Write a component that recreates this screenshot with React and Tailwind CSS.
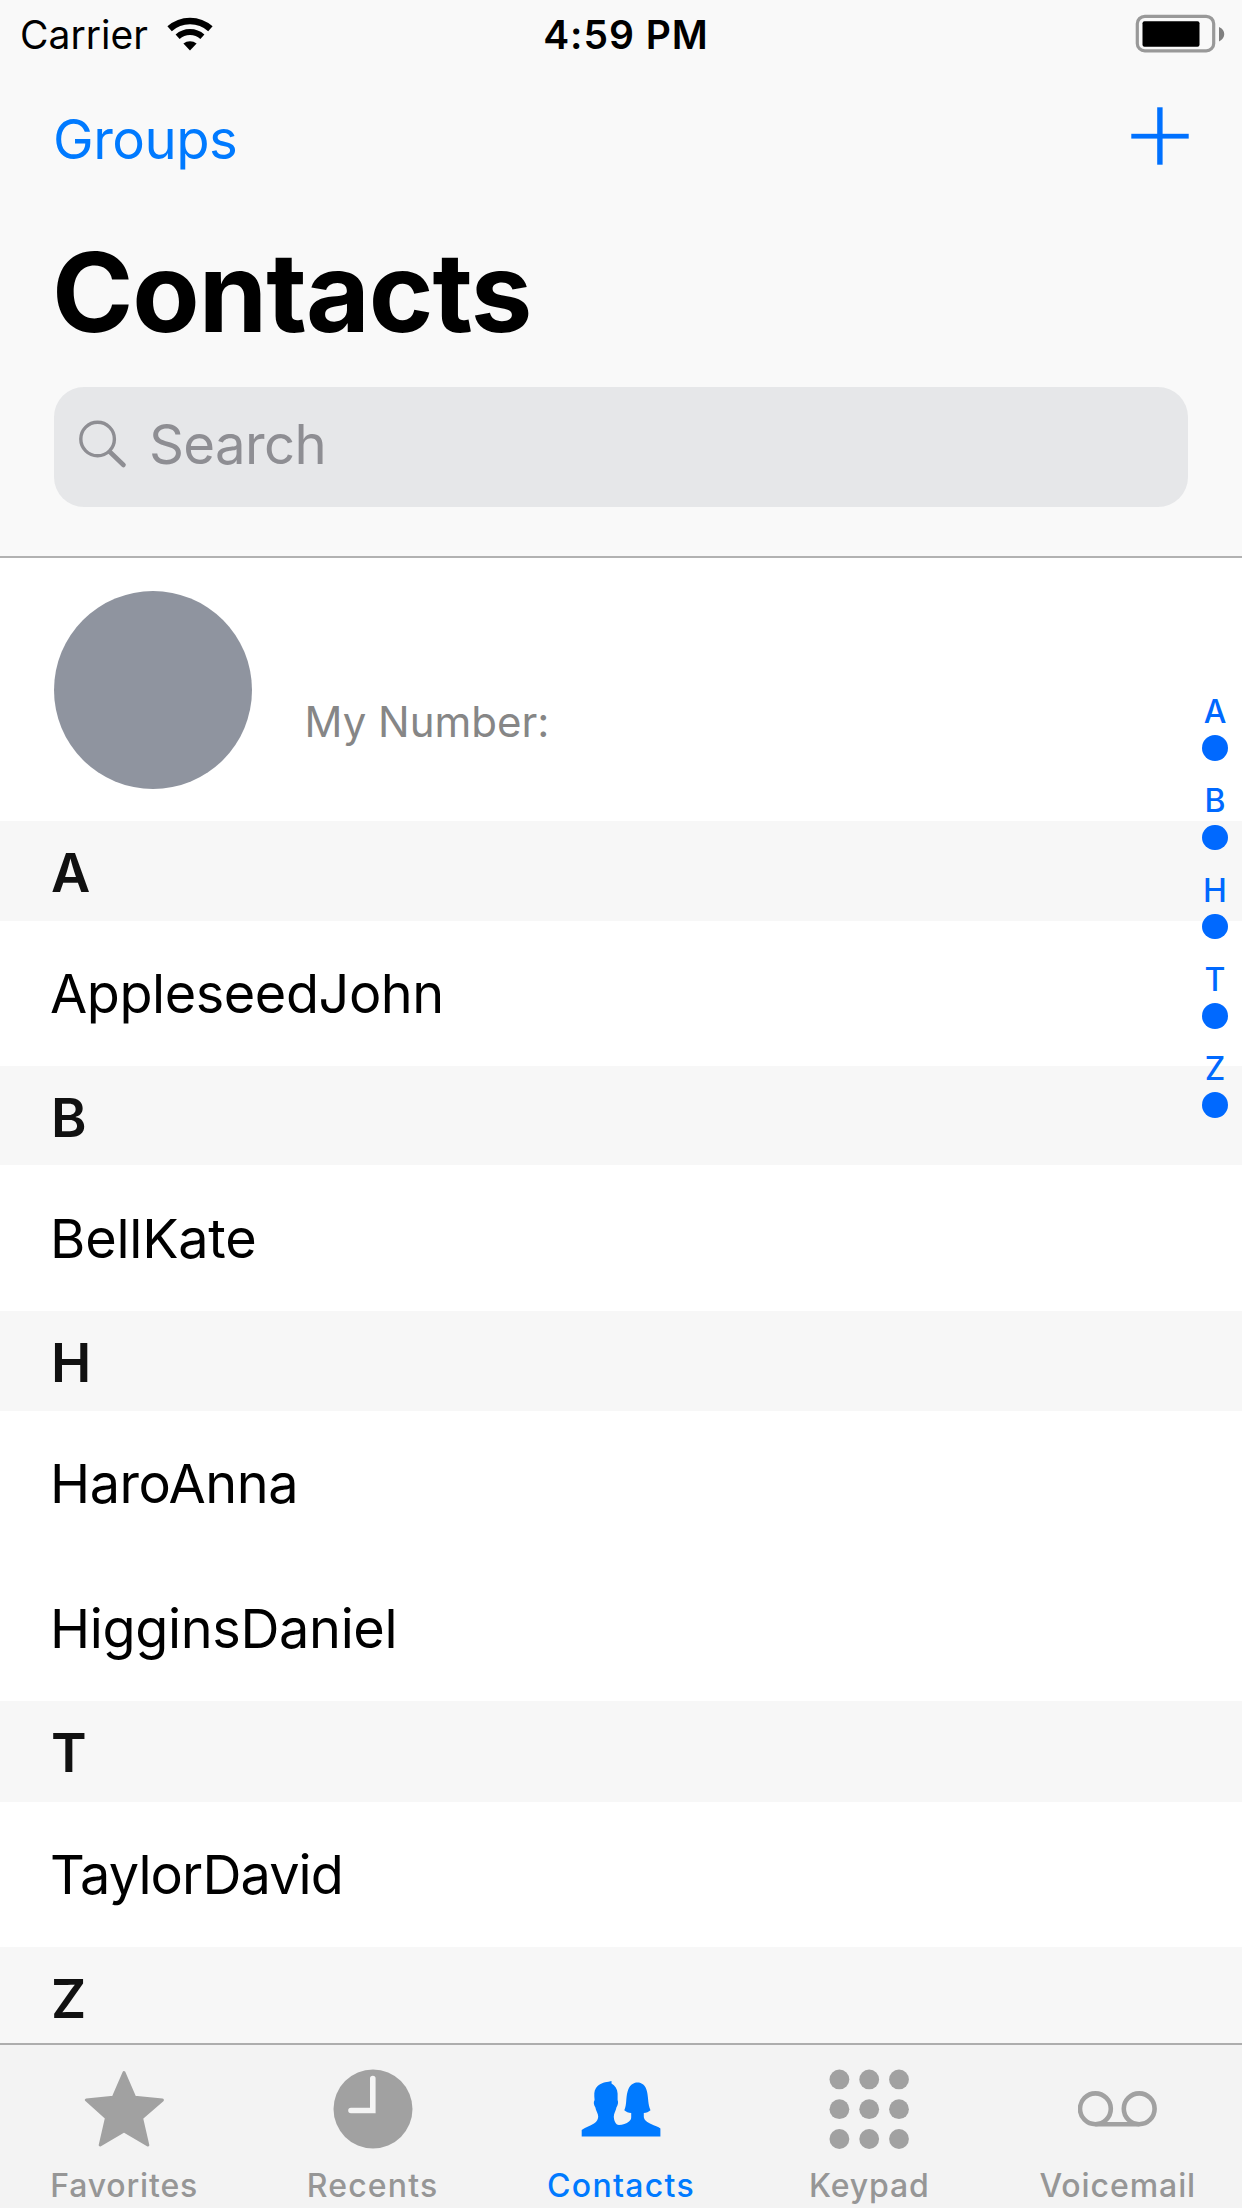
const sections = [
  {
    letter: "A",
    height: "h-[100px]",
    people: [{ name: "AppleseedJohn", style: "h-[145px] tracking-[-0.44px]" }],
  },
  {
    letter: "B",
    height: "h-[99px] pt-[4px]",
    people: [{ name: "BellKate", style: "h-[146px] pt-[2px] tracking-[-0.2px]" }],
  },
  {
    letter: "H",
    height: "h-[100px] pt-[4px]",
    people: [
      { name: "HaroAnna", style: "h-[145px] pt-[1px] tracking-[-0.48px]" },
      { name: "HigginsDaniel", style: "h-[145px] tracking-[-0.35px]" },
    ],
  },
  {
    letter: "T",
    height: "h-[101px]",
    people: [{ name: "TaylorDavid", style: "h-[145px] tracking-[-0.88px]" }],
  },
  { letter: "Z", height: "h-[100px]", people: [] },
];

function WifiIcon() {
  return (
    <svg className="ml-[18px] h-[36px] w-[48px]" viewBox="0 0 48 36" fill="none" stroke="#000">
      <path d="M3.6 12.8 A30.500 30.500 0 0 1 44.4 12.8" strokeWidth="6.6" />
      <path d="M11.6 20.8 A18.500 18.500 0 0 1 36.4 20.8" strokeWidth="6" />
      <path d="M17.4 27.600 A10.500 10.500 0 0 1 30.600 27.600 L24 34.400 Z" fill="#000" stroke="none" />
    </svg>
  );
}

function BatteryIcon() {
  return (
    <svg className="h-[40px] w-[92px]" viewBox="0 0 92 40">
      <rect x="2.3" y="2.3" width="76.4" height="34.6" rx="7.5" fill="none" stroke="#999" strokeWidth="3.2" />
      <rect x="7.500" y="7.2" width="57" height="25.6" rx="2" fill="#000" />
      <path d="M84 13 C91 16 91 24 84 27.5 Z" fill="#808080" />
    </svg>
  );
}

function PlusIcon() {
  return (
    <svg className="h-[58px] w-[58px]" viewBox="0 0 58 58" fill="#0071ff">
      <rect x="26.2" y="0.3" width="5.4" height="57.4" />
      <rect x="0.3" y="26.8" width="57.4" height="4.8" />
    </svg>
  );
}

function SearchIcon() {
  return (
    <svg className="h-[50px] w-[50px]" viewBox="0 0 50 50" fill="none" stroke="#8e8e93">
      <circle cx="19.6" cy="20" r="16.800" strokeWidth="3.4" />
      <path d="M32 33 L45.5 46" strokeWidth="4.6" strokeLinecap="round" />
    </svg>
  );
}

function StarIcon() {
  return (
    <svg className="h-[80px] w-[80px]" viewBox="0 0 80 80" fill="#a1a1a1" stroke="#a1a1a1" strokeWidth="3" strokeLinejoin="round">
      <path d="M40 3.600 L50.600 28.2 L78.400 31 L57.600 49 L63.8 76 L40 62 L16.2 76 L22.400 49 L2.400 31 L29.4 28.2 Z" />
    </svg>
  );
}

function ClockIcon() {
  return (
    <svg className="h-[80px] w-[80px]" viewBox="0 0 80 80" fill="none">
      <circle cx="40" cy="40" r="39.5" fill="#a1a1a1" />
      <path d="M39.800 9.5 V41.5 H18" stroke="#f4f4f4" strokeWidth="5.6" strokeLinecap="round" />
    </svg>
  );
}

function PeopleIcon() {
  return (
    <svg className="h-[80px] w-[80px]" viewBox="0 0 80 80" fill="#007aff">
      <path d="M0.7 67.500 V61 C4 58.600 9 56.800 13 54.500 C16 52.500 17.200 50 17.200 47.500 C17.200 44.500 14.700 41.500 14.400 38.500 C12.800 36 12.200 33 13.600 31 C13.200 26 12.800 22 15 19 C18 15 23 13 27.500 12.800 L30.500 12 V14.500 C34 16.500 36.400 20 36.600 24.500 V31 C37.600 33 37 36 35.400 38.500 C35 41.500 32.800 44.500 32.800 47.500 C32.800 51 34.500 56 38 56 C41.500 56 45.500 54.500 48 52.500 C50 51 50.200 49.500 50.200 47.500 V44 C47.500 43.800 45 43 43.300 41.300 C46 35 44.600 29.500 46.600 22.500 C48.400 16.200 52.400 13.600 56.500 13.600 C60.600 13.600 64.600 16.200 66 22.500 C67.500 29.500 66.800 35 69.500 41.300 C67.800 43 65.300 43.800 62.800 44 V47.500 C62.800 51 66 53 70 55 C73.500 56.700 77.500 57.800 79.400 59.500 V67.500 Z" />
    </svg>
  );
}

function KeypadIcon() {
  return (
    <svg className="h-[80px] w-[80px]" viewBox="0 0 80 80" fill="#a1a1a1">
      {[10.4, 40.2, 70].map((y) =>
        [10.4, 40.2, 70].map((x) => <circle key={`${x}-${y}`} cx={x} cy={y} r="9.9" />)
      )}
    </svg>
  );
}

function VoicemailIcon() {
  return (
    <svg className="h-[80px] w-[80px]" viewBox="0 0 80 80" fill="none" stroke="#a1a1a1" strokeWidth="4.6">
      <circle cx="17.4" cy="39.8" r="15.4" />
      <circle cx="61.2" cy="39.8" r="15.4" />
      <path d="M17.4 55.2 H61.2" />
    </svg>
  );
}

const tabs = [
  { label: "Favorites", Icon: StarIcon, style: "text-[#969696] tracking-[0.82px]" },
  { label: "Recents", Icon: ClockIcon, style: "text-[#969696] tracking-[1.18px]" },
  { label: "Contacts", Icon: PeopleIcon, style: "text-[#007aff] tracking-[1.28px]" },
  { label: "Keypad", Icon: KeypadIcon, style: "text-[#969696] tracking-[0.88px]" },
  { label: "Voicemail", Icon: VoicemailIcon, style: "text-[#969696] tracking-[0.92px]" },
];

function StatusBar() {
  return (
    <div className="grid h-[68px] grid-cols-3 items-center pr-[15px] pl-[20px] text-[39px] leading-none text-black">
      <div className="flex items-center">
        <span>Carrier</span>
        <WifiIcon />
      </div>
      <span className="pl-[5px] text-center font-semibold tracking-[0.97px]">4:59 PM</span>
      <div className="flex justify-end">
        <BatteryIcon />
      </div>
    </div>
  );
}

function Header() {
  return (
    <header className="h-[558px] shrink-0 border-b-2 border-[#b2b2b2] bg-[#f9f9f9]">
      <StatusBar />
      <div className="flex h-[138px] items-center justify-between px-[53px]">
        <button className="pt-[4px] text-[54.5px] leading-none tracking-[-0.5px] text-[#007aff]">Groups</button>
        <button aria-label="Add contact" className="pb-[2px]">
          <PlusIcon />
        </button>
      </div>
      <h1 className="flex h-[169px] items-center pt-[2px] pl-[52px] text-[110px] leading-none font-bold tracking-[-1.05px] text-black">
        Contacts
      </h1>
      <div className="mr-[54px] ml-[53.5px] mt-[12px] flex h-[119.500px] items-center rounded-[30px] bg-[#e6e7e9] pb-[6px] pl-[24.5px] text-[54.5px] leading-none tracking-[-0.64px] text-[#8e8e93]">
        <SearchIcon />
        <span className="ml-[21px]">Search</span>
      </div>
    </header>
  );
}

function SectionIndex() {
  return (
    <nav className="absolute top-[133px] right-0 flex w-[54px] flex-col text-[32px] font-medium text-[#0069ff]">
      {sections.map(({ letter }) => (
        <div key={letter} className="flex h-[89.3px] flex-col items-center">
          <span className="h-[40px] leading-[41px]">{letter}</span>
          <span className="mt-[4.25px] size-[25.5px] rounded-full bg-[#0069ff]" />
        </div>
      ))}
    </nav>
  );
}

export default function App() {
  return (
    <div className="flex h-[2208px] w-[1242px] flex-col overflow-hidden bg-white font-[Inter,'Liberation_Sans',sans-serif]">
      <Header />
      <main className="relative min-h-0 flex-1 overflow-hidden">
        <div className="flex h-[263px] items-center pl-[53.5px]">
          <div className="size-[198px] rounded-full bg-[#8f949f]" />
          <span className="ml-[53px] pt-[64px] text-[42px] leading-none text-[#868686]">My Number:</span>
        </div>
        {sections.map(({ letter, height, people }) => (
          <section key={letter}>
            <h2 className={`flex items-center bg-[#f7f7f7] pt-[3px] pl-[51px] text-[54px] leading-none font-semibold text-[#111] ${height}`}>
              {letter}
            </h2>
            {people.map(({ name, style }) => (
              <div key={name} className={`flex items-center pl-[50px] text-[54px] leading-none text-black ${style}`}>
                {name}
              </div>
            ))}
          </section>
        ))}
        <SectionIndex />
      </main>
      <footer className="grid h-[165px] shrink-0 grid-cols-5 border-t-2 border-[#adadad] bg-[#f3f3f3]">
        {tabs.map(({ label, Icon, style }) => (
          <div key={label} className={`flex flex-col items-center pt-[24px] text-[32px] font-medium ${style}`}>
            <Icon />
            <span className="mt-[16px] leading-[41px]">{label}</span>
          </div>
        ))}
      </footer>
    </div>
  );
}
